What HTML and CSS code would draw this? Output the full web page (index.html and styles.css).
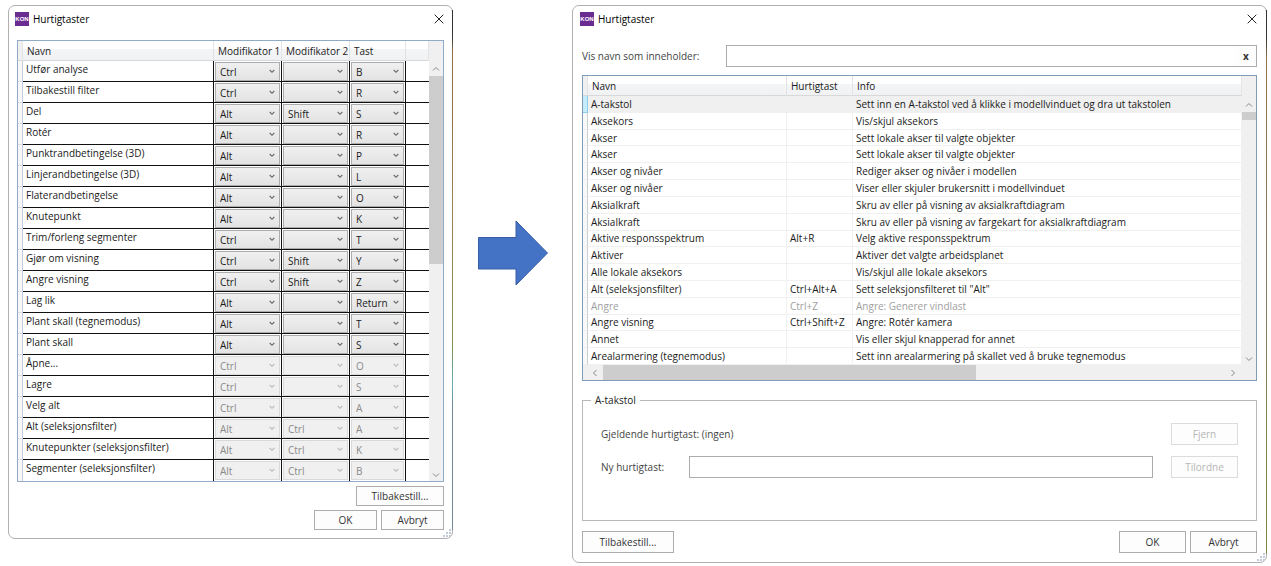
FILE: index.html
```html
<!DOCTYPE html>
<html lang="nb">
<head>
<meta charset="utf-8">
<title>Hurtigtaster</title>
<link rel="stylesheet" href="styles.css">
</head>
<body>
<main class="stage">
  <section class="window window-old" aria-label="Hurtigtaster">
    <header class="titlebar">
      <svg class="logo" viewBox="0 0 14 14" aria-hidden="true"><rect width="14" height="14" fill="#6b2c91"/><text x="7" y="8.6" text-anchor="middle">KON</text></svg>
      <h1 class="title">Hurtigtaster</h1>
      <button class="close" aria-label="Lukk"><svg viewBox="0 0 10 10"><path d="M.7.7l8.6 8.6M9.3.7.7 9.3"/></svg></button>
    </header>
    <div class="grid">
      <table class="keys">
        <colgroup><col class="c-mark"><col><col class="c-mod"><col class="c-mod"><col class="c-key"><col class="c-rest"></colgroup>
        <thead><tr><th></th><th>Navn</th><th>Modifikator 1</th><th>Modifikator 2</th><th>Tast</th><th></th></tr></thead>
        <tbody id="keys"></tbody>
      </table>
      <div class="vscroll">
        <svg class="arrow" viewBox="0 0 8 8"><path d="M1 5.5 4 2.5l3 3"/></svg>
        <div class="track"><div class="thumb thumb-old"></div></div>
        <svg class="arrow" viewBox="0 0 8 8"><path d="M1 2.5l3 3 3-3"/></svg>
      </div>
    </div>
    <footer class="actions-old">
      <button class="btn btn-wide">Tilbakestill...</button>
      <div class="pair"><button class="btn">OK</button><button class="btn">Avbryt</button></div>
    </footer>
    <svg class="grip" viewBox="0 0 10 10" aria-hidden="true"><path d="M7 1h2v2H7zM4 4h2v2H4zM7 4h2v2H7zM1 7h2v2H1zM4 7h2v2H4zM7 7h2v2H7z"/></svg>
  </section>

  <svg class="big-arrow" viewBox="0 0 70 66" aria-hidden="true"><path d="M.5 17.5H38V1L69.5 33 38 65V49H.5z"/></svg>

  <section class="window window-new" aria-label="Hurtigtaster">
    <header class="titlebar">
      <svg class="logo" viewBox="0 0 14 14" aria-hidden="true"><rect width="14" height="14" fill="#6b2c91"/><text x="7" y="8.6" text-anchor="middle">KON</text></svg>
      <h1 class="title">Hurtigtaster</h1>
      <button class="close" aria-label="Lukk"><svg viewBox="0 0 10 10"><path d="M.7.7l8.6 8.6M9.3.7.7 9.3"/></svg></button>
    </header>
    <div class="filter">
      <label for="filter">Vis navn som inneholder:</label>
      <div class="searchbox"><input id="filter" type="text"><button class="clear" aria-label="Tøm">x</button></div>
    </div>
    <div class="grid grid-new">
      <div class="table-box">
        <table class="commands">
          <colgroup><col class="c-mark"><col class="c-name"><col class="c-short"><col></colgroup>
          <thead><tr><th></th><th>Navn</th><th>Hurtigtast</th><th>Info</th></tr></thead>
          <tbody id="commands"></tbody>
        </table>
      </div>
      <div class="vscroll">
        <svg class="arrow" viewBox="0 0 8 8"><path d="M1 5.5 4 2.5l3 3"/></svg>
        <div class="track"><div class="thumb thumb-new"></div></div>
        <svg class="arrow" viewBox="0 0 8 8"><path d="M1 2.5l3 3 3-3"/></svg>
      </div>
      <div class="hscroll">
        <svg class="arrow" viewBox="0 0 8 8"><path d="M5.5 1l-3 3 3 3"/></svg>
        <div class="track"><div class="thumb thumb-h"></div></div>
        <svg class="arrow" viewBox="0 0 8 8"><path d="M2.5 1l3 3-3 3"/></svg>
      </div>
    </div>
    <fieldset class="detail">
      <legend>A-takstol</legend>
      <div class="detail-row"><span class="current">Gjeldende hurtigtast: (ingen)</span><button class="btn" disabled>Fjern</button></div>
      <div class="detail-row"><label for="newkey">Ny hurtigtast:</label><input id="newkey" type="text"><button class="btn" disabled>Tilordne</button></div>
    </fieldset>
    <footer class="actions-new">
      <button class="btn btn-wide">Tilbakestill...</button>
      <button class="btn">OK</button><button class="btn">Avbryt</button>
    </footer>
    <svg class="grip" viewBox="0 0 10 10" aria-hidden="true"><path d="M7 1h2v2H7zM4 4h2v2H4zM7 4h2v2H7zM1 7h2v2H1zM4 7h2v2H4zM7 7h2v2H7z"/></svg>
  </section>
</main>
<script src="app.js"></script>
</body>
</html>
```
FILE: styles.css
```css
* { box-sizing: border-box; }
body {
  margin: 0;
  background: #fff;
  color: #1a1a1a;
  font-family: "Open Sans", "Noto Sans", sans-serif;
  font-size: 10px;
  line-height: 14px;
}
button, input, select { font: inherit; color: inherit; margin: 0; }

.stage {
  display: grid;
  grid-template-columns: 445fr 119fr 695fr;
  align-items: start;
  min-height: 100vh;
  padding: 5px 4px 3px 8px;
}
.window {
  position: relative;
  display: flex;
  flex-direction: column;
  min-width: 0;
  padding: 0 9px;
  border: 1px solid #b0b0b0;
  border-radius: 7px;
  background: #fff;
}
.window-old { padding: 0 8px; }
.window-new { align-self: stretch; }
/* Sliver of the desktop showing along the right edge */
.window::after {
  content: "";
  position: absolute;
  top: 4px;
  right: -1px;
  bottom: 8px;
  width: 1px;
  background: linear-gradient(#333 5%, #94724c 8%, #9a7f55 40%, #7f9057 65%, #5fb3b8 72%, #71889a 76%);
}
.window-new::after { background: linear-gradient(#333 5%, #94724c 9%, #8a7f68 50%, #7c8a45); }
.big-arrow { width: 70px; margin: 215px 0 0 25px; fill: #4472c4; stroke: #385da5; stroke-width: 1; }

.titlebar { display: flex; align-items: center; height: 25px; margin-left: -2px; }
.logo { width: 14px; height: 14px; }
.logo text { font: 700 6px "Liberation Sans", sans-serif; fill: #fff; }
.title { flex: 1; margin: 0 0 0 4px; font-size: 10px; font-weight: 400; color: #000; }
.close { width: 10px; height: 10px; padding: 0; border: 0; background: none; }
.close svg { display: block; stroke: #222; fill: none; }

.grid {
  display: grid;
  grid-template-columns: 1fr 14px;
  border: 1px solid #8fabc6;
}
.window-old .grid { margin-top: 9px; }
table { width: 100%; border-collapse: separate; border-spacing: 0; table-layout: fixed; }
th, td { padding: 0; text-align: left; font-weight: 400; overflow: hidden; white-space: nowrap; }
th {
  height: 20px;
  padding-left: 4px;
  border-right: 1px solid #e2e3e5;
  border-bottom: 1px solid #d8d8d8;
  background: linear-gradient(#fff 40%, #f4f5f7 41%, #f1f2f4);
}
th:first-child { padding: 0; background: #f0f0f0; }
td:first-child { border-right: 1px solid #c9cfd5; border-bottom: 1px solid #e3e9ee; background: #f8f8f8; }
.c-mark { width: 5px; }
.c-mod { width: 68px; }
.c-key { width: 56px; }
.c-rest { width: 23px; }

.keys td { height: 21px; border-bottom: 1px solid #111; vertical-align: top; }
.keys td:first-child { border-bottom-color: #d5dde4; }
.keys td:nth-child(2) { padding: 1px 0 0 3px; border-right: 1px solid #111; }
.keys td:nth-child(n+3):nth-child(-n+5) { padding: 1px 1px 0; border-right: 1px solid #111; }
.keys tr:last-child td { border-bottom: 0; }
.keys select {
  display: block;
  appearance: none;
  width: 100%;
  height: 19px;
  padding: 0 4px;
  border: 1px solid #acacac;
  border-radius: 0;
  background: url("data:image/svg+xml,%3Csvg xmlns='http://www.w3.org/2000/svg' width='6' height='5'%3E%3Cpath d='M.7 1 3 3.3 5.3 1' fill='none' stroke='%23666' stroke-width='1.1'/%3E%3C/svg%3E") no-repeat right 4px center, linear-gradient(#f0f0f0, #e3e3e3);
}
.keys select:disabled {
  opacity: 1;
  border-color: #d9d9d9;
  color: #8a8a8a;
  background: url("data:image/svg+xml,%3Csvg xmlns='http://www.w3.org/2000/svg' width='6' height='5'%3E%3Cpath d='M.7 1 3 3.3 5.3 1' fill='none' stroke='%23bbb' stroke-width='1.1'/%3E%3C/svg%3E") no-repeat right 4px center, #f0f0f0;
}

.vscroll { display: flex; flex-direction: column; align-items: center; padding: 24px 0 2px; background: #f0f0f0; }
.vscroll .track { flex: 1; align-self: stretch; margin: 3px 0; }
.arrow { width: 8px; height: 8px; fill: none; stroke: #888; stroke-width: 1; flex: none; }
.thumb { background: #cdcdcd; }
.thumb-old { height: 48%; }
.thumb-new { height: 8px; }
.hscroll { grid-column: 1 / -1; display: flex; align-items: center; height: 15px; padding: 0 19px 0 8px; background: #f0f0f0; }
.hscroll .track { flex: 1; align-self: stretch; margin: 0 4px; }
.thumb-h { width: 60%; height: 100%; }

.btn {
  width: 63px;
  height: 20px;
  padding: 0;
  border: 1px solid #acacac;
  background: #fdfdfd;
  color: #333;
}
.btn:disabled { border-color: #dcdcdc; color: #b5b5b5; }
.btn-wide { width: 88px; }
.actions-old { display: flex; flex-direction: column; align-items: flex-end; gap: 4px; padding: 4px 0 8px; }
.pair { display: flex; gap: 4px; }
.grip { position: absolute; right: 0; bottom: 0; width: 10px; height: 10px; fill: #c3cad8; }

.filter { display: flex; align-items: center; margin-top: 14px; color: #444; }
.filter label { width: 144px; }
.searchbox { display: flex; flex: 1; height: 22px; border: 1px solid #acacac; }
.searchbox input { flex: 1; min-width: 0; border: 0; outline: 0; padding: 0 4px; background: none; }
.clear { width: 20px; padding: 0; border: 0; background: #fdfdfd; color: #333; font-weight: 700; }

.grid-new { flex: 1; grid-template-rows: 1fr auto; margin-top: 8px; border-color: #7f9db9; }
.grid-new .vscroll { padding-top: 25px; }
.table-box { height: 100%; min-height: 0; }
.commands { height: 100%; }
.commands td { height: 16px; padding-left: 3px; border-right: 1px solid #f0f0f0; border-bottom: 1px solid #f0f0f0; line-height: 14px; }
.commands td:first-child { padding: 0; border-right-color: #c9cfd5; }
.c-name { width: 199px; }
.c-short { width: 66px; }
.commands .selected td { background: #f0f0f0; }
.commands .selected td:first-child { background: #c4ecfb; border-color: #8fcce8; }
.commands .off { color: #a0a0a0; }

.detail { min-width: 0; margin: 12px 0 0; padding: 16px 18px 42px; border: 1px solid #b8b8b8; color: #444; }
.detail legend { margin-left: -10px; padding: 0 4px; color: #222; }
.detail-row { display: flex; align-items: center; height: 22px; }
.detail-row + .detail-row { margin-top: 11px; }
.current { flex: 1; }
.detail-row label { width: 88px; }
.detail-row input { flex: 1; min-width: 0; height: 22px; margin-right: 18px; padding: 0 4px; border: 1px solid #acacac; }
.window-new .btn { width: 67px; height: 22px; }
.window-new .btn-wide { width: 92px; margin-right: auto; }
.actions-new { display: flex; gap: 4px; padding: 10px 0 9px; }
```
FILE: app.js
```js
const keys = [
  ["Utfør analyse", "Ctrl", "", "B"],
  ["Tilbakestill filter", "Ctrl", "", "R"],
  ["Del", "Alt", "Shift", "S"],
  ["Rotér", "Alt", "", "R"],
  ["Punktrandbetingelse (3D)", "Alt", "", "P"],
  ["Linjerandbetingelse (3D)", "Alt", "", "L"],
  ["Flaterandbetingelse", "Alt", "", "O"],
  ["Knutepunkt", "Alt", "", "K"],
  ["Trim/forleng segmenter", "Ctrl", "", "T"],
  ["Gjør om visning", "Ctrl", "Shift", "Y"],
  ["Angre visning", "Ctrl", "Shift", "Z"],
  ["Lag lik", "Alt", "", "Return"],
  ["Plant skall (tegnemodus)", "Alt", "", "T"],
  ["Plant skall", "Alt", "", "S"],
  ["Åpne...", "Ctrl", "", "O", true],
  ["Lagre", "Ctrl", "", "S", true],
  ["Velg alt", "Ctrl", "", "A", true],
  ["Alt (seleksjonsfilter)", "Alt", "Ctrl", "A", true],
  ["Knutepunkter (seleksjonsfilter)", "Alt", "Ctrl", "K", true],
  ["Segmenter (seleksjonsfilter)", "Alt", "Ctrl", "B", true]
];
const labels = ["Modifikator 1", "Modifikator 2", "Tast"];
document.getElementById("keys").innerHTML = keys.map(([name, m1, m2, key, locked]) =>
  `<tr><td></td><td>${name}</td>${[m1, m2, key].map((v, i) =>
    `<td><select aria-label="${name}: ${labels[i]}"${locked ? " disabled" : ""}><option>${v}</option></select></td>`).join("")}<td></td></tr>`
).join("");

const commands = [
  ["A-takstol", "", "Sett inn en A-takstol ved å klikke i modellvinduet og dra ut takstolen", "selected"],
  ["Aksekors", "", "Vis/skjul aksekors"],
  ["Akser", "", "Sett lokale akser til valgte objekter"],
  ["Akser", "", "Sett lokale akser til valgte objekter"],
  ["Akser og nivåer", "", "Rediger akser og nivåer i modellen"],
  ["Akser og nivåer", "", "Viser eller skjuler brukersnitt i modellvinduet"],
  ["Aksialkraft", "", "Skru av eller på visning av aksialkraftdiagram"],
  ["Aksialkraft", "", "Skru av eller på visning av fargekart for aksialkraftdiagram"],
  ["Aktive responsspektrum", "Alt+R", "Velg aktive responsspektrum"],
  ["Aktiver", "", "Aktiver det valgte arbeidsplanet"],
  ["Alle lokale aksekors", "", "Vis/skjul alle lokale aksekors"],
  ["Alt (seleksjonsfilter)", "Ctrl+Alt+A", "Sett seleksjonsfilteret til \"Alt\""],
  ["Angre", "Ctrl+Z", "Angre: Generer vindlast", "off"],
  ["Angre visning", "Ctrl+Shift+Z", "Angre: Rotér kamera"],
  ["Annet", "", "Vis eller skjul knapperad for annet"],
  ["Arealarmering (tegnemodus)", "", "Sett inn arealarmering på skallet ved å bruke tegnemodus"]
];
document.getElementById("commands").innerHTML = commands.map(([name, key, info, cls = ""]) =>
  `<tr class="${cls}"><td></td><td>${name}</td><td>${key}</td><td>${info}</td></tr>`
).join("");
```
